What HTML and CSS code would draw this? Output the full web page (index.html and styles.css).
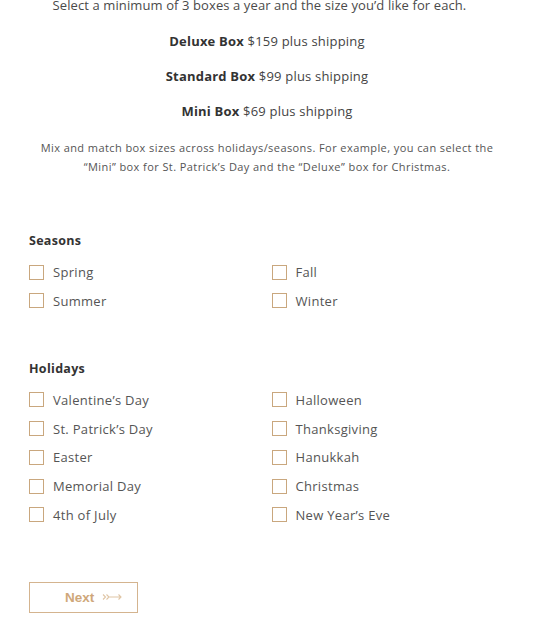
FILE: index.html
```html
<!DOCTYPE html>
<html>
<head>
<meta charset="utf-8">
<link rel="stylesheet" href="styles.css">
</head>
<body>
<div class="page">
  <div class="intro">
    <p class="lead">Select a minimum of 3 boxes a year and the size you’d like for each.</p>
    <p class="price"><b>Deluxe Box</b> $159 plus shipping</p>
    <p class="price"><b>Standard Box</b> $99 plus shipping</p>
    <p class="price"><b>Mini Box</b> $69 plus shipping</p>
    <p class="note">Mix and match box sizes across holidays/seasons. For example, you can select the<br>“Mini” box for St. Patrick’s Day and the “Deluxe” box for Christmas.</p>
  </div>

  <section class="group seasons">
    <h3 class="group-title">Seasons</h3>
    <div class="options">
      <label class="opt"><span class="box"></span>Spring</label>
      <label class="opt"><span class="box"></span>Fall</label>
      <label class="opt"><span class="box"></span>Summer</label>
      <label class="opt"><span class="box"></span>Winter</label>
    </div>
  </section>

  <section class="group holidays">
    <h3 class="group-title">Holidays</h3>
    <div class="options">
      <label class="opt"><span class="box"></span>Valentine’s Day</label>
      <label class="opt"><span class="box"></span>Halloween</label>
      <label class="opt"><span class="box"></span>St. Patrick’s Day</label>
      <label class="opt"><span class="box"></span>Thanksgiving</label>
      <label class="opt"><span class="box"></span>Easter</label>
      <label class="opt"><span class="box"></span>Hanukkah</label>
      <label class="opt"><span class="box"></span>Memorial Day</label>
      <label class="opt"><span class="box"></span>Christmas</label>
      <label class="opt"><span class="box"></span>4th of July</label>
      <label class="opt"><span class="box"></span>New Year’s Eve</label>
    </div>
  </section>

  <button class="next">Next <svg class="arrow" width="20" height="8" viewBox="0 0 20 8"><path d="M1 1.5 L3.5 4 L1 6.5 M4.5 1.5 L7 4 L4.5 6.5 M7 4 H19 M16.5 1.5 L19 4 L16.5 6.5" fill="none" stroke="#e0c6a6" stroke-width="1.1"/></svg></button>
</div>
</body>
</html>
```

FILE: styles.css
```css
* { box-sizing: border-box; }
html, body { margin: 0; padding: 0; background: #fff; }
body {
  font-family: "Open Sans", "Liberation Sans", sans-serif;
  color: #444;
}
.page {
  width: 539px;
  padding: 0 25px 0 29px;
}
.intro {
  text-align: center;
  margin: 0 -16px 0 -25px;
}
.intro p { margin: 0; }
.lead {
  font-size: 13px;
  line-height: 16px;
  margin-top: -3px !important;
  padding-right: 15px;
  color: #4a4a4a;
  letter-spacing: 0.1px;
}
.price {
  font-size: 13px;
  line-height: 16px;
  margin-top: 19px !important;
  color: #444;
  letter-spacing: 0.2px;
}
.price:nth-child(2) { margin-top: 20px !important; }
.price b { font-weight: 700; color: #333; }
.note {
  font-size: 11px;
  line-height: 19px;
  margin-top: 19px !important;
  color: #555;
  letter-spacing: 0.42px;
}
.group { margin-top: 57px; }
.holidays { margin-top: 51px; }
.group-title {
  font-size: 12.5px;
  font-weight: 700;
  color: #333;
  margin: 0 0 14px;
  line-height: 16px;
  letter-spacing: 0.3px;
}
.options {
  display: grid;
  grid-template-columns: 1fr 1fr;
  row-gap: 10.75px;
}
.opt {
  display: flex;
  align-items: center;
  font-size: 13px;
  line-height: 18px;
  color: #555;
  letter-spacing: 0.3px;
}
.box {
  width: 15px;
  height: 15px;
  border: 1.5px solid #c9a77e;
  margin-right: 9px;
  flex: none;
}
.next {
  margin-top: 58px;
  width: 109px;
  height: 31px;
  border: 1.5px solid #d4b48f;
  background: #fff;
  color: #cfa77a;
  font-family: "Liberation Sans Narrow", "Liberation Sans", sans-serif;
  font-weight: 700;
  font-size: 13.5px;
  display: flex;
  align-items: center;
  justify-content: flex-start;
  gap: 8px;
  padding: 0 0 0 35px;
}
.arrow { display: block; }
```
